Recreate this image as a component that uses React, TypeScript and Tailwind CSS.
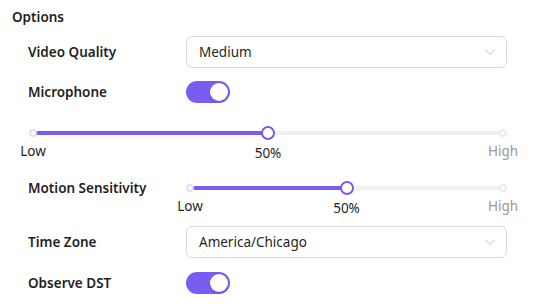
import React, { useState } from 'react';

const Chevron: React.FC = () => (
  <svg width="12" height="12" viewBox="0 0 12 12" fill="none">
    <path d="M1.5 4l4.5 4.5L10.5 4" stroke="#c4c4c4" strokeWidth="1" strokeLinecap="round" strokeLinejoin="round" />
  </svg>
);

const Select: React.FC<{ value: string }> = ({ value }) => (
  <div className="w-[321px] h-8 border border-[#d9d9d9] rounded-md pl-3 pr-[10px] flex items-center justify-between bg-white">
    <span className="text-[#1f1f1f] text-[13.5px]">{value}</span>
    <Chevron />
  </div>
);

const Toggle: React.FC = () => {
  const [on, setOn] = useState(true);
  return (
    <button
      onClick={() => setOn(!on)}
      className={`relative block w-[44px] h-[22px] rounded-full ${on ? 'bg-[#7a5cf0]' : 'bg-[#bfbfbf]'}`}
    >
      <span
        className={`absolute top-[2px] w-[18px] h-[18px] rounded-full bg-white shadow-sm ${on ? 'right-[2px]' : 'left-[2px]'}`}
      />
    </button>
  );
};

const Slider: React.FC<{ width: string }> = ({ width }) => (
  <div className={`relative h-[14px] ${width}`}>
    <div className="absolute left-0 right-0 top-[5px] h-1 rounded-full bg-[#f0f0f0]" />
    <div className="absolute left-0 w-1/2 top-[5px] h-1 rounded-full bg-[#7a5cf0]" />
    <span className="absolute -left-1 top-[3px] w-2 h-2 rounded-full bg-white border-2 border-[#e3dcfc]" />
    <span className="absolute -right-1 top-[3px] w-2 h-2 rounded-full bg-white border-2 border-[#ececec]" />
    <span className="absolute left-1/2 -translate-x-1/2 top-0 w-[14px] h-[14px] rounded-full bg-white border-2 border-[#7a5cf0]" />
    <span className="absolute left-0 -translate-x-1/2 top-[15px] leading-5 text-[13.5px] text-[#1f1f1f]">Low</span>
    <span className="absolute left-1/2 -translate-x-1/2 top-[17px] leading-5 text-[13.5px] text-[#1f1f1f]">50%</span>
    <span className="absolute left-full -translate-x-1/2 top-[15px] leading-5 text-[13.5px] text-[#999]">High</span>
  </div>
);

export default function App() {
  return (
    <div className="w-[533px] h-[304px] bg-white font-['Noto_Sans',sans-serif] text-[13.5px] text-[#1f1f1f] pl-3 pt-[6px] overflow-hidden">
      <div className="font-semibold leading-[22px]">Options</div>
      <div className="pl-4 mt-2">
        <div className="flex items-center h-8">
          <div className="w-[158px] font-semibold">Video Quality</div>
          <Select value="Medium" />
        </div>
        <div className="flex items-center h-8 mt-[8px]">
          <div className="w-[158px] font-semibold">Microphone</div>
          <Toggle />
        </div>
        <div className="ml-[5px] mt-[18px]">
          <Slider width="w-[470px]" />
        </div>
        <div className="flex items-center h-[14px] mt-[41px]">
          <div className="w-[158px] font-semibold">Motion Sensitivity</div>
          <div className="ml-1">
            <Slider width="w-[313px]" />
          </div>
        </div>
        <div className="flex items-center h-8 mt-[31px]">
          <div className="w-[158px] font-semibold">Time Zone</div>
          <Select value="America/Chicago" />
        </div>
        <div className="flex items-center h-8 mt-[9px]">
          <div className="w-[158px] font-semibold">Observe DST</div>
          <Toggle />
        </div>
      </div>
    </div>
  );
}
